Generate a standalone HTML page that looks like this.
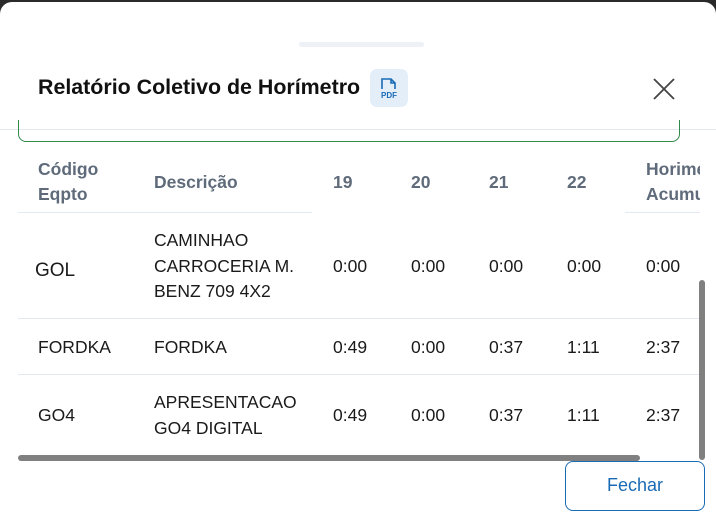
<!DOCTYPE html>
<html><head><meta charset="utf-8"><style>
*{margin:0;padding:0;box-sizing:border-box}
body{width:716px;height:523px;background:#2a2a2a;font-family:"Liberation Sans",sans-serif;position:relative;overflow:hidden}
.modal{position:absolute;left:0;top:2px;width:716px;height:530px;background:#fff;border-radius:12px 12px 0 0;overflow:hidden}
.a{position:absolute;white-space:nowrap}
.h{color:#5f6b7a;font-weight:bold;font-size:17.5px;line-height:25px}
.c{color:#1a1a1a;font-size:17.5px;line-height:25.5px}
.ln{position:absolute;height:1px;background:#e3e9f2}
.clip{position:absolute;left:0;top:0;width:700px;height:530px;overflow:hidden}
</style></head><body>
<div class="modal">
<div class="a" style="left:299px;top:40px;width:125px;height:5px;border-radius:3px;background:#eef1f5"></div>
<div class="a" style="left:38px;top:73px;font-size:21.4px;font-weight:bold;color:#111">Relatório Coletivo de Horímetro</div>
<div class="a" style="left:370px;top:67px;width:38px;height:38px;border-radius:7px;background:#e3eef8">
<svg width="38" height="38" viewBox="0 0 38 38"><path d="M12 20V10h9l4 4v6M21 10v4h4" fill="none" stroke="#1a6bb5" stroke-width="1.6"/><text x="19" y="29" font-size="8" font-weight="bold" fill="#1a6bb5" text-anchor="middle" font-family="Liberation Sans">PDF</text></svg></div>
<svg class="a" style="left:652px;top:75px" width="24" height="24"><path d="M2 2L22 22M22 2L2 22" stroke="#444" stroke-width="1.8"/></svg>
<div class="ln" style="left:0;top:127px;width:716px"></div>
<div class="a" style="left:18px;top:118px;width:662px;height:22px;border:1.5px solid #2e8b4a;border-top:none;border-radius:0 0 8px 8px"></div>
<div class="clip">
<div class="a h" style="left:38px;top:155px">Código<br>Eqpto</div>
<div class="a h" style="left:154px;top:168px">Descrição</div>
<div class="a h" style="left:333px;top:168px">19</div>
<div class="a h" style="left:411px;top:168px">20</div>
<div class="a h" style="left:489px;top:168px">21</div>
<div class="a h" style="left:567px;top:168px">22</div>
<div class="a h" style="left:646px;top:155px">Horimetro<br>Acumulado</div>
<div class="ln" style="left:18px;top:210px;width:294px"></div>
<div class="ln" style="left:625px;top:210px;width:91px"></div>
<div class="a c" style="left:35px;top:256px;font-size:19px">GOL</div>
<div class="a c" style="left:154px;top:226px">CAMINHAO<br>CARROCERIA M.<br>BENZ 709 4X2</div>
<div class="a c" style="left:333px;top:252px">0:00</div><div class="a c" style="left:411px;top:252px">0:00</div><div class="a c" style="left:489px;top:252px">0:00</div><div class="a c" style="left:567px;top:252px">0:00</div><div class="a c" style="left:646px;top:252px">0:00</div>
<div class="ln" style="left:18px;top:316px;width:698px"></div>
<div class="a c" style="left:38px;top:333px">FORDKA</div><div class="a c" style="left:154px;top:333px">FORDKA</div>
<div class="a c" style="left:333px;top:333px">0:49</div><div class="a c" style="left:411px;top:333px">0:00</div><div class="a c" style="left:489px;top:333px">0:37</div><div class="a c" style="left:567px;top:333px">1:11</div><div class="a c" style="left:646px;top:333px">2:37</div>
<div class="ln" style="left:18px;top:372px;width:698px"></div>
<div class="a c" style="left:38px;top:401px">GO4</div><div class="a c" style="left:154px;top:388px">APRESENTACAO<br>GO4 DIGITAL</div>
<div class="a c" style="left:333px;top:401px">0:49</div><div class="a c" style="left:411px;top:401px">0:00</div><div class="a c" style="left:489px;top:401px">0:37</div><div class="a c" style="left:567px;top:401px">1:11</div><div class="a c" style="left:646px;top:401px">2:37</div>
</div>
<div class="a" style="left:18px;top:453px;width:622px;height:6px;border-radius:3px;background:#808080"></div>
<div class="a" style="left:699px;top:278px;width:6px;height:180px;border-radius:3px;background:#808080"></div>
<div class="a" style="left:565px;top:459px;width:140px;height:50px;border:1.5px solid #1a6bb5;border-radius:8px;color:#1a6bb5;font-size:18px;text-align:center;line-height:47px">Fechar</div>
</div>
</body></html>
